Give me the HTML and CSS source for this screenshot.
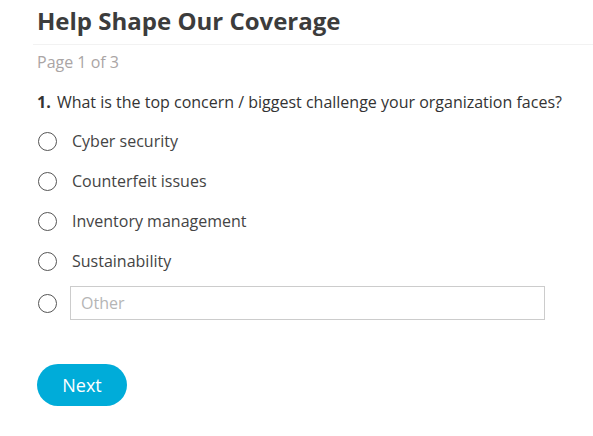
FILE: index.html
```html
<!DOCTYPE html>
<html>
<head>
<meta charset="utf-8">
<link rel="stylesheet" href="styles.css">
</head>
<body>
<div class="survey">
  <h1 class="title">Help Shape Our Coverage</h1>
  <div class="page">Page 1 of 3</div>
  <div class="question"><span class="num">1.</span> What is the top concern / biggest challenge your organization faces?</div>
  <ul class="options">
    <li class="option"><span class="radio"></span><span class="label">Cyber security</span></li>
    <li class="option"><span class="radio"></span><span class="label">Counterfeit issues</span></li>
    <li class="option"><span class="radio"></span><span class="label">Inventory management</span></li>
    <li class="option"><span class="radio"></span><span class="label">Sustainability</span></li>
    <li class="option other"><span class="radio"></span><input class="other-input" type="text" placeholder="Other"></li>
  </ul>
  <button class="next">Next</button>
</div>
</body>
</html>
```
FILE: styles.css
```css
html, body { margin: 0; padding: 0; background: #fff; }
body { font-family: "Open Sans", sans-serif; color: #444; }
.survey { padding: 5px 0 0 37px; }
.title { font-size: 24px; font-weight: 700; color: #3c3c3c; margin: 0 0 0 -4px; line-height: 32px; padding: 0 0 7px 4px; border-bottom: 1px solid #f2f2f2; }
.page { font-size: 16px; color: #aaa5a5; margin-top: 5px; line-height: 24px; }
.question { font-size: 16px; color: #333; margin-top: 17px; line-height: 22px; }
.num { font-weight: 700; margin-right: 2px; }
.options { list-style: none; margin: 8px 0 0 0; padding: 0; }
.option { display: flex; align-items: center; height: 40px; font-size: 16px; color: #444; }
.radio { width: 19px; height: 19px; border: 1.4px solid #555; border-radius: 50%; box-sizing: border-box; flex: none; margin-left: 1px; }
.label { margin-left: 15px; }
.option.other { height: 44px; }
.other-input { margin-left: 13px; width: 475px; height: 34px; box-sizing: border-box; border: 1px solid #ccc; font-family: "Open Sans", sans-serif; font-size: 16px; padding: 0 10px; color: #444; outline: none; }
.other-input::placeholder { color: #b5b5b5; }
.next { margin-top: 39px; width: 90px; height: 42px; border: none; border-radius: 21px; background: #00acd9; color: #fff; font-family: "Open Sans", sans-serif; font-size: 18px; padding: 0; }
```
